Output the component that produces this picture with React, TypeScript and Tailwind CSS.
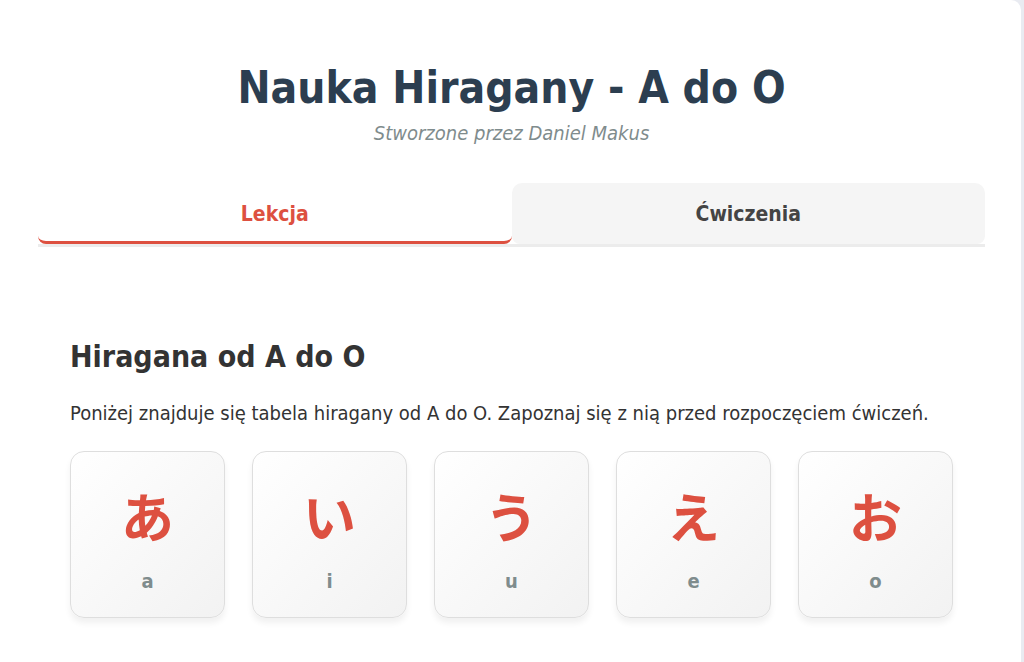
import React from "react";

const kana = [
  { k: "あ", r: "a" },
  { k: "い", r: "i" },
  { k: "う", r: "u" },
  { k: "え", r: "e" },
  { k: "お", r: "o" },
];

const font = { fontFamily: '"DejaVu Sans Condensed", "DejaVu Sans", "Noto Sans CJK JP", sans-serif' };

export default function App() {
  return (
    <div className="min-h-[662px] bg-[#e9ebf1] flex" style={font}>
      <div className="w-[1021px] min-h-[662px] bg-white rounded-tr-[10px] pt-[62px] pl-[38px] pr-[36px]">
        <h1 className="text-center text-[44px] leading-[52px] font-bold text-[#2c3e50]">
          Nauka Hiragany - A do O
        </h1>
        <p className="text-center italic text-[20px] leading-[24px] text-[#7f8c8d] mt-[7px]">
          Stworzone przez Daniel Makus
        </p>
        <div className="mt-[38px] flex border-b-[3px] border-[#ececec]">
          <div className="flex-1 h-[61px] pt-[5px] bg-white rounded-t-[10px] rounded-b-[8px] border-b-[3px] border-[#dd5040] flex items-center justify-center text-[21px] font-bold text-[#dd5040]">
            Lekcja
          </div>
          <div className="flex-1 h-[61px] pt-[3px] bg-[#f5f5f5] rounded-t-[10px] rounded-b-[8px] flex items-center justify-center text-[21px] font-bold text-[#444]">
            Ćwiczenia
          </div>
        </div>
        <div className="px-[32px] pt-[92px]">
          <h2 className="text-[30px] leading-[36px] font-bold text-[#333]">Hiragana od A do O</h2>
          <p className="mt-[24px] text-[20px] leading-[28px] text-[#333]">
            Poniżej znajduje się tabela hiragany od A do O. Zapoznaj się z nią przed rozpoczęciem ćwiczeń.
          </p>
          <div className="mt-[24px] flex gap-[27px]">
            {kana.map((c) => (
              <div
                key={c.r}
                className="w-[155px] h-[167px] rounded-[14px] border border-[#dedede] bg-gradient-to-br from-white to-[#f2f2f2] shadow-[0_5px_6px_rgba(0,0,0,0.06)] flex flex-col items-center"
              >
                <div
                  className="mt-[31px] text-[53px] leading-[64px] text-[#dd5040] font-bold"
                  style={{ fontFamily: '"Noto Sans CJK JP", sans-serif' }}
                >
                  {c.k}
                </div>
                <div className="mt-[22px] text-[20px] leading-[24px] font-bold text-[#7f8c8d]">{c.r}</div>
              </div>
            ))}
          </div>
        </div>
      </div>
    </div>
  );
}
